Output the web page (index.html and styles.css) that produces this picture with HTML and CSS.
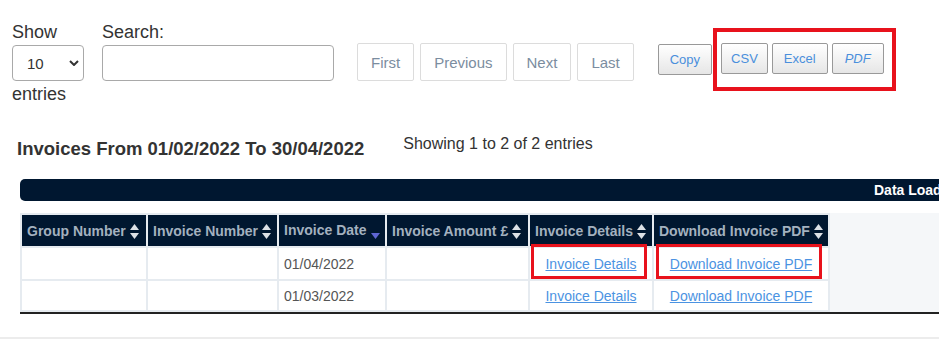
FILE: index.html
```html
<!DOCTYPE html>
<html lang="en">

<head>
  <meta charset="UTF-8">
  <meta name="viewport" content="width=device-width, initial-scale=1.0">
  <title>Invoices</title>
  <link rel="stylesheet" href="styles.css">
</head>

<body>
  <div class="page">
    <div class="toolbar">
      <div class="length">
        <label class="lbl">Show</label>
        <div class="select-wrap">
          <select class="select">
            <option>10</option>
          </select>
          <svg class="chev" width="10" height="6" viewBox="0 0 10 6">
            <polyline points="1,1 5,5 9,1" fill="none" stroke="#333" stroke-width="2" />
          </svg>
        </div>
        <span class="lbl entries">entries</span>
      </div>

      <div class="search">
        <label class="lbl">Search:</label>
        <input class="search-input" type="text">
      </div>

      <div class="paging">
        <button type="button" class="page-btn">First</button>
        <button type="button" class="page-btn">Previous</button>
        <button type="button" class="page-btn">Next</button>
        <button type="button" class="page-btn">Last</button>
      </div>

      <div class="export">
        <button type="button" class="btn">Copy</button>
        <div class="marked">
          <button type="button" class="btn csv">CSV</button>
          <button type="button" class="btn">Excel</button>
          <button type="button" class="btn pdf">PDF</button>
        </div>
      </div>
    </div>

    <div class="title-row">
      <h2 class="title">Invoices From 01/02/2022 To 30/04/2022</h2>
      <div class="info">Showing 1 to 2 of 2 entries</div>
    </div>

    <div class="status-bar"><span>Data Loaded</span></div>

    <div class="table-wrap">
      <table class="grid">
        <thead>
          <tr>
            <th class="c1">Group Number<svg class="sort" width="9" height="15" viewBox="0 0 9 15"><polygon points="0,6 4.5,0 9,6" /><polygon points="0,9 4.5,15 9,9" /></svg></th>
            <th class="c2">Invoice Number<svg class="sort" width="9" height="15" viewBox="0 0 9 15"><polygon points="0,6 4.5,0 9,6" /><polygon points="0,9 4.5,15 9,9" /></svg></th>
            <th class="c3">Invoice Date<svg class="sort-down" width="9" height="6" viewBox="0 0 9 6"><polygon points="0,0 9,0 4.5,6" /></svg></th>
            <th class="c4">Invoice Amount £<svg class="sort" width="9" height="15" viewBox="0 0 9 15"><polygon points="0,6 4.5,0 9,6" /><polygon points="0,9 4.5,15 9,9" /></svg></th>
            <th class="c5">Invoice Details<svg class="sort" width="9" height="15" viewBox="0 0 9 15"><polygon points="0,6 4.5,0 9,6" /><polygon points="0,9 4.5,15 9,9" /></svg></th>
            <th class="c6">Download Invoice PDF<svg class="sort" width="9" height="15" viewBox="0 0 9 15"><polygon points="0,6 4.5,0 9,6" /><polygon points="0,9 4.5,15 9,9" /></svg></th>
          </tr>
        </thead>
        <tbody>
          <tr>
            <td></td>
            <td></td>
            <td>01/04/2022</td>
            <td></td>
            <td class="link-cell"><a href="#" class="flag">Invoice Details</a></td>
            <td class="link-cell"><a href="#" class="flag">Download Invoice PDF</a></td>
          </tr>
          <tr class="last">
            <td></td>
            <td></td>
            <td>01/03/2022</td>
            <td></td>
            <td class="link-cell"><a href="#">Invoice Details</a></td>
            <td class="link-cell"><a href="#">Download Invoice PDF</a></td>
          </tr>
        </tbody>
      </table>
    </div>
  </div>
  <div class="footer-line"></div>
</body>

</html>
```

FILE: styles.css
```css
html,
body {
  margin: 0;
  padding: 0;
  overflow: hidden;
  background-color: #fff;
}

body {
  font-family: "Liberation Sans", Arial, sans-serif;
  color: #333;
}

.page {
  overflow: hidden;
}

/* top controls */
.toolbar {
  display: flex;
  align-items: flex-start;
  padding: 21px 0 0 12px;
}

.lbl {
  display: block;
  font-size: 18px;
  line-height: 22px;
  color: #333;
}

.length {
  width: 72px;
}

.select-wrap {
  position: relative;
  margin-top: 2px;
  width: 72px;
  height: 36px;
}

.select {
  width: 72px;
  height: 36px;
  box-sizing: border-box;
  border: 1px solid #a9a9a9;
  border-radius: 4px;
  background-color: #fff;
  padding: 0 0 0 14px;
  font-family: inherit;
  font-size: 15px;
  color: #333;
  appearance: none;
  -webkit-appearance: none;
  outline: none;
}

.chev {
  position: absolute;
  left: 57px;
  top: 15px;
  pointer-events: none;
}

.entries {
  margin-top: 2px;
}

.search {
  margin-left: 18px;
}

.search-input {
  display: block;
  margin-top: 2px;
  width: 232px;
  height: 36px;
  box-sizing: border-box;
  border: 1px solid #a9a9a9;
  border-radius: 4px;
  outline: none;
}

.paging {
  display: flex;
  gap: 6px;
  margin: 22px 0 0 23px;
}

.page-btn {
  height: 38px;
  padding: 0 13px;
  border: 1px solid #dcdcdc;
  border-radius: 2px;
  background-color: #fff;
  font-family: inherit;
  font-size: 15px;
  color: #7b8da0;
  cursor: pointer;
}

.export {
  display: flex;
  align-items: center;
  margin: 7px 0 0 24px;
}

.btn {
  height: 31px;
  padding: 0 11px;
  border: 1px solid #999;
  border-radius: 2px;
  background: linear-gradient(#fff, #e6e6e6);
  font-family: inherit;
  font-size: 13px;
  color: #4a8fdc;
  cursor: pointer;
}

.btn.csv {
  padding: 0 9px;
}

.btn.pdf {
  font-style: italic;
  padding: 0 12px;
}

.marked {
  display: flex;
  gap: 4px;
  margin-left: 1px;
  padding: 11px 8px 13px 4px;
  border: 4px solid #e8121c;
}

/* title */
.title-row {
  display: flex;
  align-items: flex-start;
  margin-top: 28px;
}

.title {
  margin: 5px 0 0 17px;
  font-size: 18.5px;
  line-height: 22px;
  font-weight: bold;
  color: #333;
}

.info {
  margin-left: 39px;
  font-size: 16px;
  line-height: 22px;
  color: #333;
}

.status-bar {
  margin: 19px -20px 0 20px;
  height: 22px;
  padding-left: 854px;
  border-radius: 5px;
  background-color: #001730;
  color: #fff;
  font-size: 14px;
  font-weight: bold;
  line-height: 22px;
  white-space: nowrap;
}

/* table */
.table-wrap {
  margin: 12px 0 0 20px;
  background-color: #f5f7f9;
  border-bottom: 2px solid #222;
}

.grid {
  table-layout: fixed;
  border-collapse: separate;
  border-spacing: 2px;
  background-color: #e6ebf0;
  font-size: 14px;
}

.grid th {
  height: 31px;
  padding: 0 0 0 5px;
  box-sizing: border-box;
  background-color: #001730;
  color: #a3b1bf;
  font-weight: bold;
  text-align: left;
  white-space: nowrap;
}

.grid th.c1 { width: 124px; }
.grid th.c2 { width: 129px; }
.grid th.c3 { width: 106px; }
.grid th.c4 { width: 141px; }
.grid th.c5 { width: 122px; }
.grid th.c6 { width: 174px; }

.sort {
  margin-left: 4px;
  vertical-align: -3px;
  fill: #dde1e6;
}

.sort-down {
  margin-left: 5px;
  vertical-align: -4px;
  fill: #5f66d3;
}

.grid td {
  height: 31px;
  padding: 0 5px;
  box-sizing: border-box;
  background-color: #fff;
  color: #555;
}

.grid tr.last td {
  height: 29px;
}

.grid td.link-cell {
  text-align: center;
}

.grid td a {
  color: #4b93e2;
  text-decoration: underline;
}

a.flag {
  position: relative;
}

a.flag::after {
  content: '';
  position: absolute;
  top: -12px;
  bottom: -7px;
  left: -14px;
  right: -10px;
  border: 3px solid #e8121c;
}

.footer-line {
  margin-top: 23px;
  height: 2px;
  background-color: #ececec;
}
```
